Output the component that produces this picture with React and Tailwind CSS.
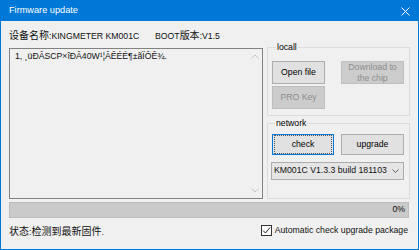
const font = { fontFamily: '"Liberation Sans", "Noto Sans CJK SC", Arial, sans-serif' };

const Cjk = ({ children }) => (
  <span className="text-[10px]" style={{ fontFamily: '"Noto Sans CJK SC", sans-serif' }}>
    {children}
  </span>
);

const Btn = ({ children, disabled, focused, className = '' }) => (
  <div
    className={`flex items-center justify-center text-center leading-[11px] border ${
      disabled
        ? 'bg-[#cccccc] border-[#bfbfbf] text-[#8d8d8d]'
        : focused
        ? 'bg-[#e1e1e1] border-[#0078d7] text-black'
        : 'bg-[#e1e1e1] border-[#adadad] text-black'
    } ${className}`}
  >
    {focused ? (
      <div className="flex items-center justify-center w-full h-full border border-dotted border-[#555] m-[1px]">
        {children}
      </div>
    ) : (
      children
    )}
  </div>
);

const Group = ({ label, className = '', children }) => (
  <fieldset className={`border border-[#dcdcdc] ${className}`}>
    <legend className="ml-[4px] px-[1px] leading-[11px] text-[8.7px] text-black">{label}</legend>
    {children}
  </fieldset>
);

export default function App() {
  return (
    <div className="w-[419px] h-[250px] flex flex-col bg-[#0078d7] text-[8.7px] text-[#111]" style={font}>
      {/* title bar */}
      <div className="h-[21px] shrink-0 flex items-center justify-between pl-[9px] pr-[9px] text-white text-[9.2px]">
        <span>Firmware update</span>
        <svg width="9" height="9" viewBox="0 0 9 9" className="mt-[1px]">
          <path d="M0.5 0.5 L8.5 8.5 M8.5 0.5 L0.5 8.5" stroke="#fff" strokeWidth="1" />
        </svg>
      </div>

      {/* client area */}
      <div className="flex-1 mx-[1px] mb-[1px] bg-[#f0f0f0] flex flex-col px-[8px] pt-[7px]">
        <div className="h-[14px] flex items-center leading-[14px]">
          <span className="w-[146px]">
            <Cjk>设备名称</Cjk>:KINGMETER KM001C
          </span>
          <span>
            BOOT<Cjk>版本</Cjk>:V1.5
          </span>
        </div>

        <div className="flex gap-[4px]">
          {/* text area */}
          <div className="mt-[6px] w-[254px] h-[151px] border border-[#828282] flex">
            <div className="flex-1 pl-[5px] pt-[1px] leading-[12px]">1, ¸üÐÂSCP×îÐÂ40W¹¦ÂÊÉÉ¶±ãÏÔÊ¾.</div>
            <div className="w-[14px] flex flex-col items-center justify-between py-[5px]">
              <svg width="8" height="5" viewBox="0 0 8 5">
                <path d="M0.5 4.5 L4 1 L7.5 4.5" fill="none" stroke="#c4c4c4" strokeWidth="1" />
              </svg>
              <svg width="8" height="5" viewBox="0 0 8 5">
                <path d="M0.5 0.5 L4 4 L7.5 0.5" fill="none" stroke="#c4c4c4" strokeWidth="1" />
              </svg>
            </div>
          </div>

          {/* right column */}
          <div className="w-[143px] flex flex-col gap-[2px]">
            <Group label="locall" className="h-[74px] pl-[4px] pt-[8px]">
              <div className="grid grid-cols-[53px_63px] gap-x-[16px] gap-y-[2px]">
                <Btn className="h-[23px]">Open file</Btn>
                <Btn disabled className="h-[23px]">
                  Download to
                  <br />
                  the chip
                </Btn>
                <Btn disabled className="h-[23px]">PRO Key</Btn>
              </div>
            </Group>
            <Group label="network" className="h-[81px] pl-[3px] pt-[5px]">
              <div className="flex gap-[7px] pl-[1px]">
                <Btn focused className="w-[62px] h-[21px]">check</Btn>
                <Btn className="w-[63px] h-[21px]">upgrade</Btn>
              </div>
              <div className="mt-[7px] w-[133px] h-[18px] bg-[#e5e5e5] border border-[#acacac] flex items-center justify-between pl-[2px] pr-[4px]">
                <span className="whitespace-nowrap">KM001C V1.3.3 build 181103</span>
                <svg width="7" height="4" viewBox="0 0 7 4" className="shrink-0">
                  <path d="M0.5 0.5 L3.5 3.5 L6.5 0.5" fill="none" stroke="#606060" strokeWidth="1" />
                </svg>
              </div>
            </Group>
          </div>
        </div>

        {/* progress bar */}
        <div className="mt-[3px] mr-[1px] h-[16px] bg-[#cacaca] border border-[#bcbcbc] flex items-center justify-end pr-[3px]">
          0%
        </div>

        {/* status row */}
        <div className="mt-[6px] h-[14px] flex items-center justify-between">
          <span>
            <Cjk>状态</Cjk>:<Cjk>检测到最新固件</Cjk>.
          </span>
          <div className="flex items-center gap-[3px] mr-[2px]">
            <div className="w-[11px] h-[11px] bg-white border border-[#333333] flex items-center justify-center">
              <svg width="9" height="9" viewBox="0 0 9 9">
                <path d="M1 4.5 L3.5 7 L8 1.5" fill="none" stroke="#222" strokeWidth="1" />
              </svg>
            </div>
            <span>Automatic check upgrade package</span>
          </div>
        </div>
      </div>
    </div>
  );
}
